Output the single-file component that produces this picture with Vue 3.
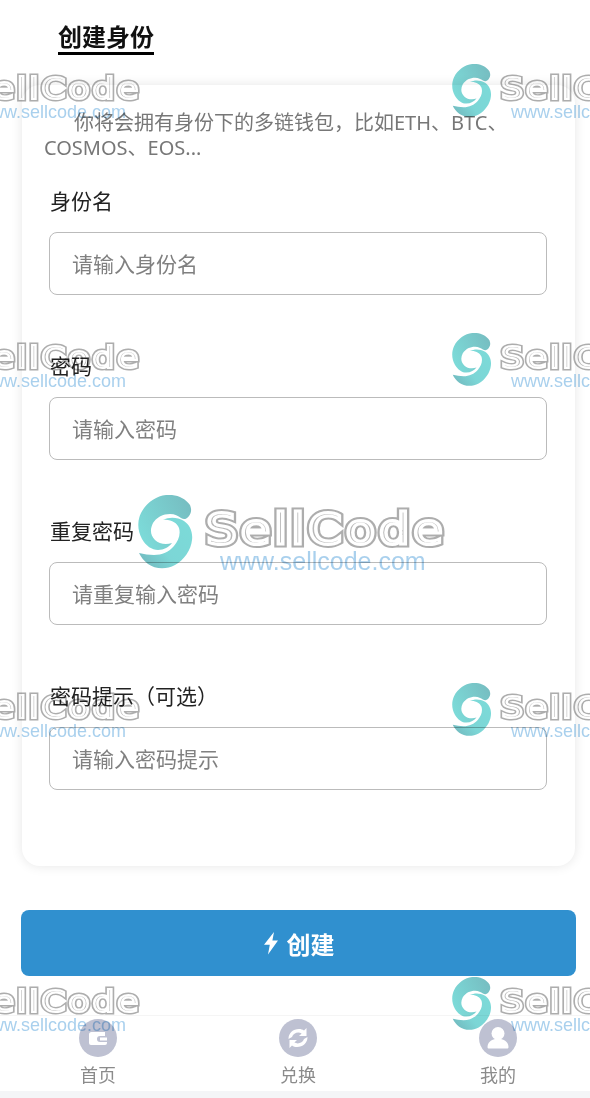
<script setup>
const fields = [
  { label: '身份名', placeholder: '请输入身份名', type: 'text' },
  { label: '密码', placeholder: '请输入密码', type: 'password' },
  { label: '重复密码', placeholder: '请重复输入密码', type: 'password' },
  { label: '密码提示（可选）', placeholder: '请输入密码提示', type: 'text' }
]
const marks = [
  { x: 452, y: 64, small: true }, { x: -81, y: 64, small: true },
  { x: 452, y: 333, small: true }, { x: -81, y: 333, small: true },
  { x: 138, y: 495, small: false },
  { x: 452, y: 683, small: true }, { x: -81, y: 683, small: true },
  { x: 452, y: 977, small: true }, { x: -81, y: 977, small: true }
]
</script>

<template>
  <div class="page">
    <main class="main">
      <header class="head"><h1 class="title">创建身份</h1></header>
      <section class="card">
        <p class="intro">你将会拥有身份下的多链钱包，比如ETH、BTC、COSMOS、EOS...</p>
        <div v-for="f in fields" :key="f.label" class="field">
          <label class="label">{{ f.label }}</label>
          <input class="input" :type="f.type" :placeholder="f.placeholder" />
        </div>
      </section>
      <button class="create" type="button">
        <svg class="bolt" viewBox="0 0 16 24" width="16" height="24"><path d="M11 1 1 13.800h5.800L5 23.500l10-14H9.400z" fill="#fff"/></svg>
        创建
      </button>
    </main>
    <nav class="nav">
      <div class="tab">
        <svg class="ico" viewBox="0 0 38 38"><circle cx="19" cy="19" r="19" fill="#bec1d2"/><path d="M10 15.500a2.500 2.500 0 0 1 2.500-2.500H26v4h-5a3 3 0 0 0 0 6h7v1a2 2 0 0 1-2 2H12a2 2 0 0 1-2-2z" fill="#fff"/><rect x="21" y="18.500" width="7" height="3" fill="#fff"/></svg>
        <span>首页</span>
      </div>
      <div class="tab">
        <svg class="ico" viewBox="0 0 38 38"><circle cx="19" cy="19" r="19" fill="#bec1d2"/><path d="M9.500 20c0-6 4.500-10 10.500-10 2 0 3.500.5 5 1.500L27.500 9v8H20l2.600-2.600c-3.600-1.900-8.200-.4-9.600 3.600z" fill="#fff"/><path d="M28.500 18c0 6-4.500 10-10.500 10-2 0-3.500-.5-5-1.500L10.500 29v-8H18l-2.600 2.600c3.600 1.900 8.200.4 9.600-3.600z" fill="#fff"/></svg>
        <span>兑换</span>
      </div>
      <div class="tab">
        <svg class="ico" viewBox="0 0 38 38"><circle cx="19" cy="19" r="19" fill="#bec1d2"/><circle cx="19" cy="14.500" r="6.500" fill="#fff"/><path d="M8.500 28c0-4.500 3.500-7 7.500-8h6c4 1 7.500 3.500 7.500 8 0 1-.6 1.500-1.500 1.500H10C9.100 29.500 8.500 29 8.500 28z" fill="#fff"/></svg>
        <span>我的</span>
      </div>
    </nav>
    <div class="marks" aria-hidden="true">
      <div v-for="(m, i) in marks" :key="i" class="mark" :class="{ small: m.small }" :style="{ left: m.x + 'px', top: m.y + 'px' }">
        <svg class="logo" viewBox="0 0 56 74" width="56" height="74">
          <defs>
            <linearGradient :id="'g' + i" x1="0" y1=".6" x2="1" y2=".1">
              <stop offset="0" stop-color="#7cdad8"/><stop offset="1" stop-color="#76bcc0"/>
            </linearGradient>
            <linearGradient :id="'h' + i" x1="1" y1=".2" x2="0" y2="1">
              <stop offset="0" stop-color="#7cdad8"/><stop offset=".55" stop-color="#7cd6d6"/><stop offset="1" stop-color="#70b4ba"/>
            </linearGradient>
          </defs>
          <path :fill="`url(#g${i})`" d="M52 10C47 3 38-1 28 0 18 1 8 8 3 18-1 26-.5 36 4 44c4 7 10 11 16 11 6 0 11-3 14-7-6 2-13 1-17-3-5-5-5-11-2-17 4-6 10-9 17-9 5 0 8 2 11 4 3 2 6 1 8-2 2-3 3-6 1-11z"/>
          <path :fill="`url(#h${i})`" d="M25 25c6-3 14-3 21 1 6 4 9 11 8 19-1 10-8 20-17 25-9 5-20 4-27-1-4-3-7-7-9-11 5 1 10 2 15 2 8 0 15-3 20-9 4-5 7-11 5-18-2-5-8-9-16-8z"/>
        </svg>
        <div class="brand" data-text="SellCode">SellCode</div>
        <div class="site">www.sellcode.com</div>
      </div>
    </div>
  </div>
</template>

<style>
html, body { margin: 0; background: #fff; }
</style>

<style scoped>
.page {
  position: relative;
  width: 590px;
  height: 1098px;
  overflow: hidden;
  display: flex;
  flex-direction: column;
  background: #f4f5f7;
  font-family: "Noto Sans", "Noto Sans CJK SC", sans-serif;
}
.main { flex: 1; background: #fff; }
.head { height: 85px; padding-left: 58px; box-sizing: border-box; padding-top: 21px; }
.title {
  display: inline-block;
  margin: 0;
  font-size: 24px;
  line-height: 31px;
  font-weight: 700;
  color: #111;
  border-bottom: 3px solid #000;
}
.card {
  box-sizing: border-box;
  margin: 0 15px 44px 22px;
  height: 781px;
  padding: 25px 27px 0;
  background: #fff;
  border-radius: 18px;
  box-shadow: 0 0 12px rgba(0, 0, 0, .1);
}
.intro {
  margin: 0 0 26px -5px;
  font-size: 20px;
  line-height: 25px;
  color: #777;
  text-indent: 30px;
  width: 478px;
}
.field { margin-bottom: 56px; }
.label {
  display: block;
  padding-left: 1px;
  font-size: 21px;
  line-height: 30px;
  margin-bottom: 16px;
  color: #222;
}
.input {
  display: block;
  box-sizing: border-box;
  width: 498px;
  height: 63px;
  padding: 0 23px 0 22px;
  border: 1px solid #bbb;
  border-radius: 8px;
  outline: none;
  background: #fff;
  font: inherit;
  font-size: 21px;
  color: #333;
}
.input::placeholder { color: #808080; opacity: 1; }
.create {
  display: flex;
  align-items: center;
  justify-content: center;
  gap: 8px;
  box-sizing: border-box;
  width: 555px;
  height: 66px;
  margin-left: 21px;
  border: 0;
  border-radius: 8px;
  background: #3090cf;
  color: #fff;
  font: inherit;
  font-size: 24px;
  font-weight: 700;
}
.nav {
  box-sizing: border-box;
  height: 76px;
  margin-bottom: 7px;
  padding-left: 80px;
  display: flex;
  gap: 164px;
  background: #fff;
  border-top: 1px solid #f5f5f5;
}
.tab {
  width: 36px;
  display: flex;
  flex-direction: column;
  align-items: center;
  font-size: 18px;
  line-height: 24px;
  color: #8b8b8b;
  padding-top: 3px;
}
.ico { width: 38px; height: 38px; flex: none; margin-bottom: 6px; }
.tab span { white-space: nowrap; }
.marks { position: absolute; inset: 0; pointer-events: none; }
.mark { position: absolute; width: 320px; height: 75px; transform-origin: 0 0; mix-blend-mode: multiply; }
.mark.small { transform: scale(.72); }
.logo { position: absolute; left: 0; top: 0; }
.brand {
  position: absolute;
  left: 68px;
  top: 7px;
  font-family: "DejaVu Sans", sans-serif;
  font-size: 42px;
  line-height: 56px;
  letter-spacing: 3px;
  white-space: nowrap;
  color: #aaa;
  -webkit-text-stroke: 7px #a9a9a9;
  opacity: .95;
  transform: scaleX(1.16);
  transform-origin: 0 50%;
}
.brand::after {
  content: attr(data-text);
  position: absolute;
  left: 0;
  top: 0;
  color: #b4b4b4;
  -webkit-text-stroke: 3px #fff;
}
.site {
  position: absolute;
  left: 82px;
  top: 52px;
  font-family: "Liberation Sans", sans-serif;
  font-size: 25px;
  line-height: 29px;
  white-space: nowrap;
  color: rgba(147, 196, 232, .8);
}
</style>
